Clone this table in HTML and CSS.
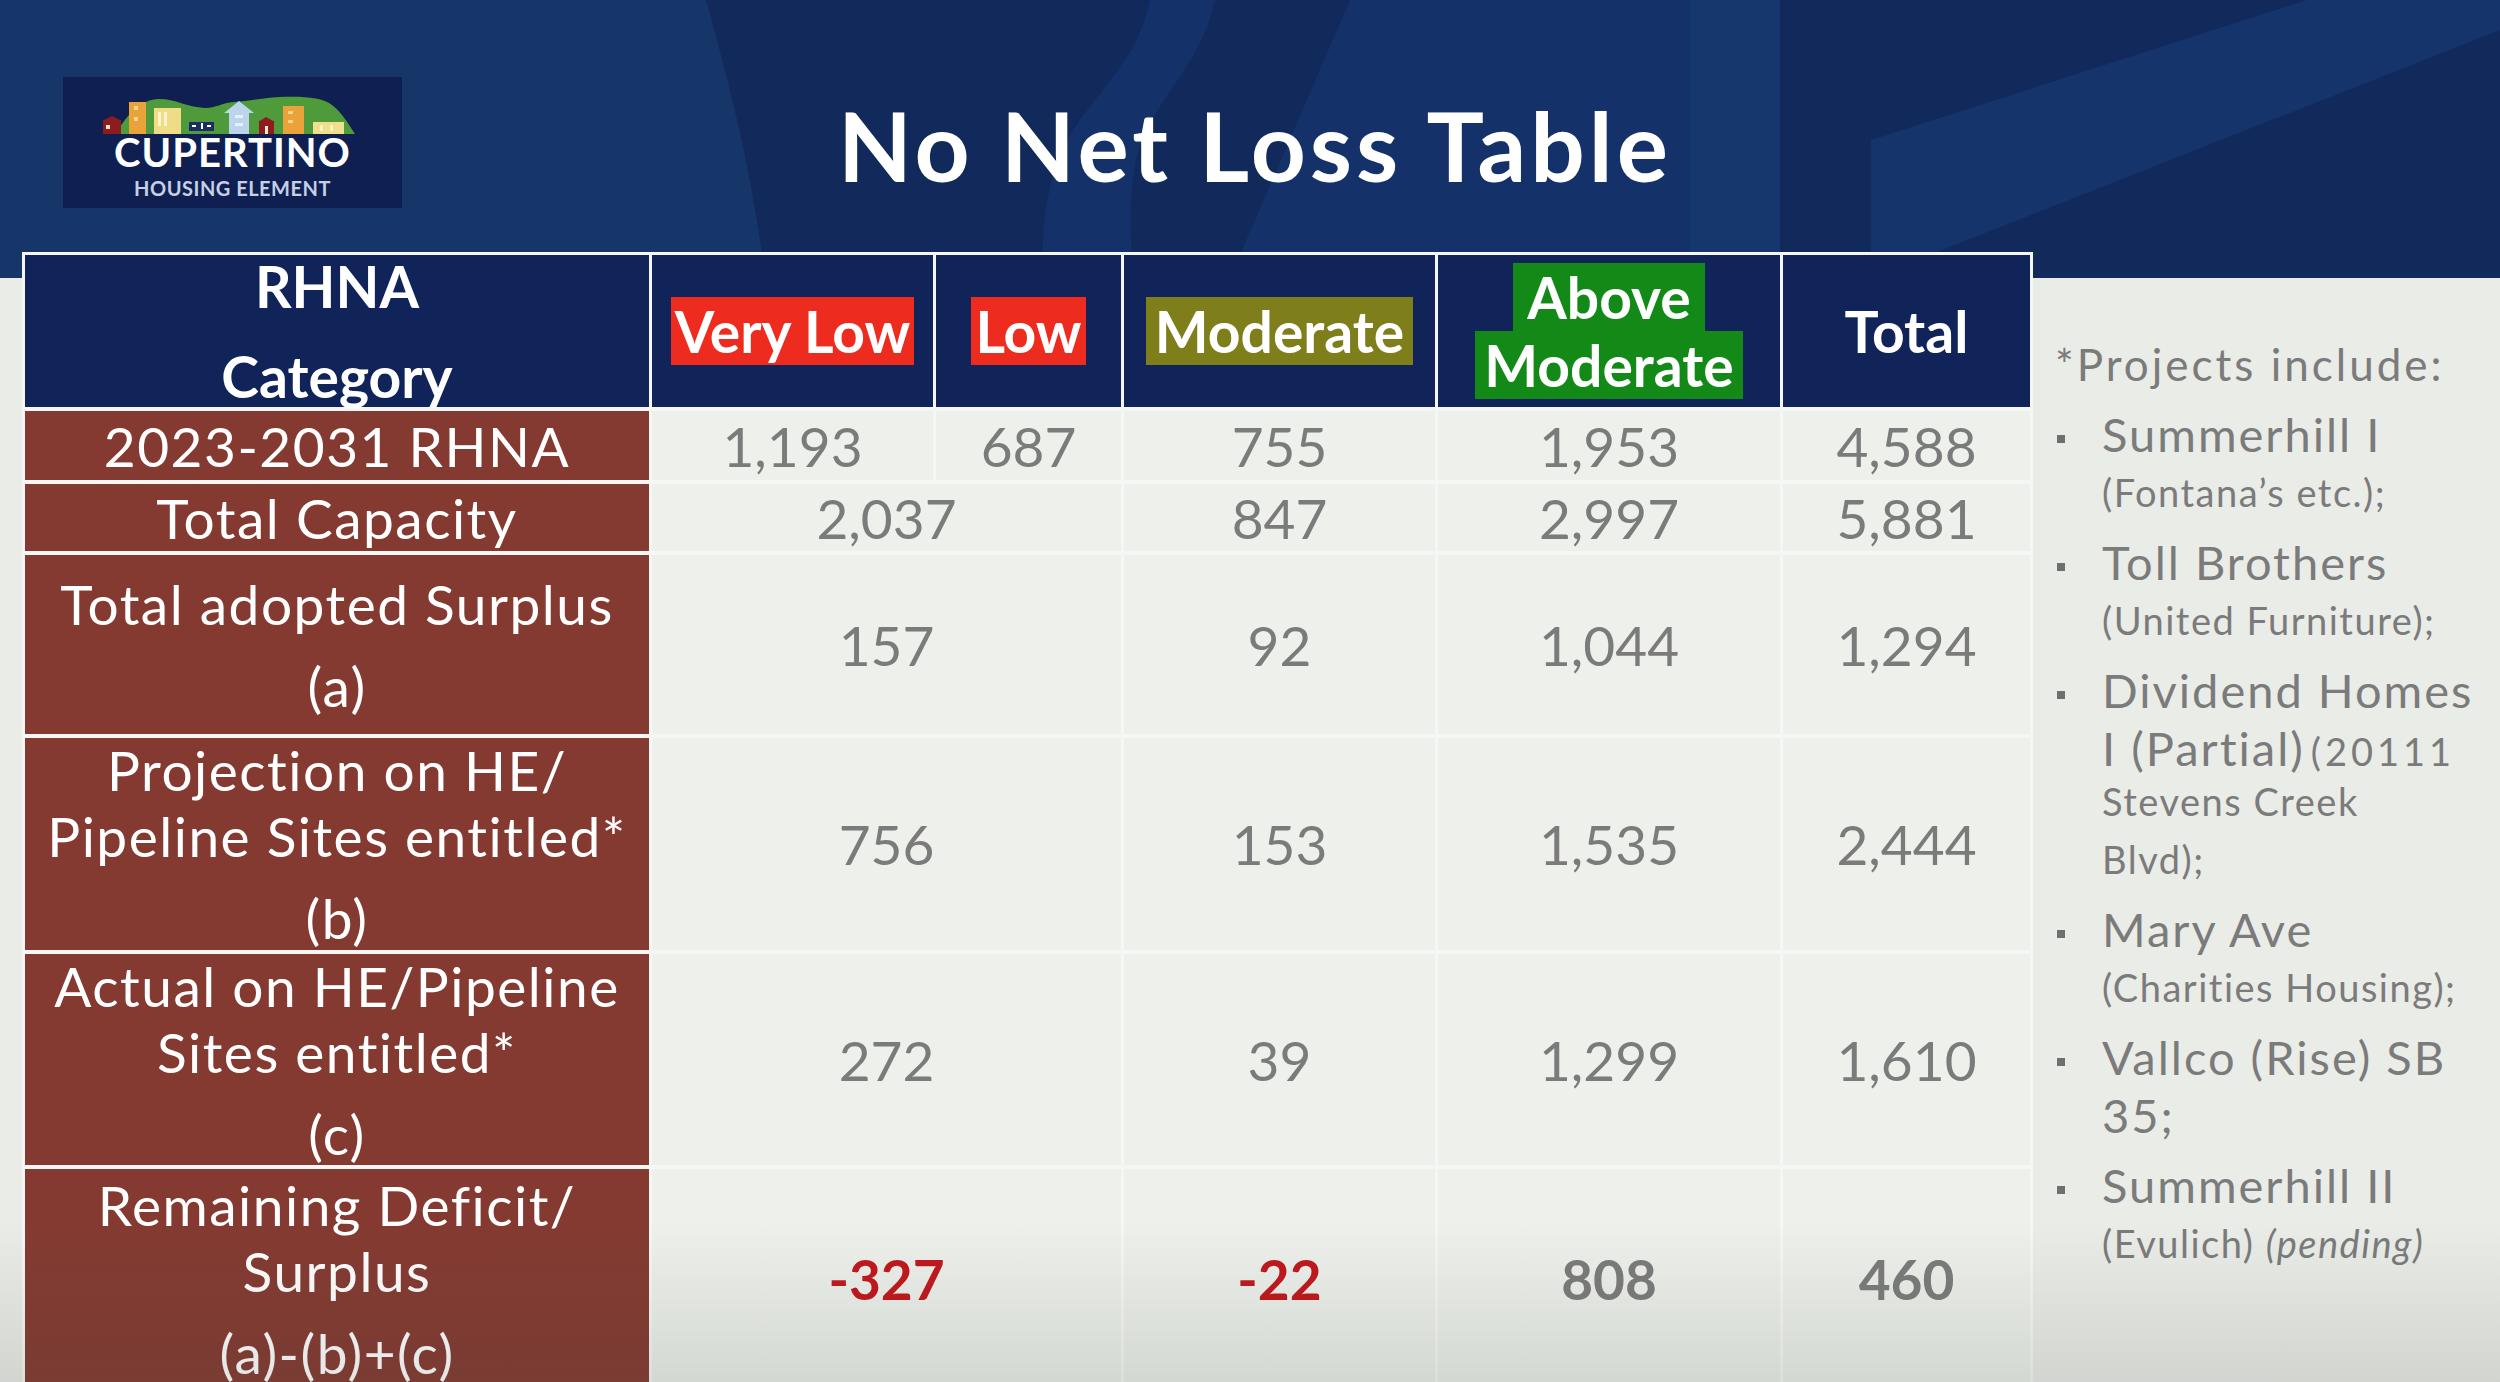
FILE: index.html
```html
<!DOCTYPE html>
<html lang="en">
<head>
<meta charset="utf-8">
<title>No Net Loss Table</title>
<link rel="stylesheet" href="styles.css">
</head>
<body>
<div class="slide">
  <header class="top">
    <div class="logo">
      <svg class="skyline" width="337" height="40" viewBox="0 0 337 40">
        <path d="M52 39 C62 20 78 4 95 4 C112 4 122 12 141 13 C152 13 158 8 170 7 C185 6 198 3 215 2 C238 1 258 2 268 10 C278 18 284 28 291 39 Z" fill="#4f9a3a"/>
        <polygon points="39,25 57,25 57,39 39,39" fill="#8e1c1c"/>
        <polygon points="38,26 48,21 58,26" fill="#8e1c1c"/>
        <rect x="42" y="30" width="4" height="4" fill="#f3e6d0"/>
        <rect x="65" y="7" width="17" height="32" fill="#eaa23a"/>
        <rect x="70" y="11" width="4" height="4" fill="#f7d58c"/>
        <rect x="70" y="22" width="4" height="4" fill="#f7d58c"/>
        <rect x="90" y="13" width="27" height="26" fill="#f0dc86"/>
        <rect x="94" y="17" width="3" height="14" fill="#fbf3cc"/>
        <rect x="100" y="17" width="3" height="14" fill="#fbf3cc"/>
        <rect x="125" y="27" width="25" height="9" fill="#1c2d63"/>
        <rect x="128" y="30" width="4" height="2" fill="#ffffff"/>
        <rect x="137" y="28" width="2" height="6" fill="#ffffff"/>
        <rect x="143" y="30" width="4" height="2" fill="#ffffff"/>
        <polygon points="165,39 165,18 160,18 175,6 190,18 185,18 185,39" fill="#bcd5ec"/>
        <rect x="171" y="20" width="8" height="3" fill="#e6f0fa"/>
        <rect x="171" y="28" width="8" height="3" fill="#e6f0fa"/>
        <polygon points="195,26 210,26 210,39 195,39" fill="#8e1c1c"/>
        <polygon points="194,27 202,22 211,27" fill="#8e1c1c"/>
        <rect x="201" y="31" width="3" height="8" fill="#f3e6d0"/>
        <rect x="219" y="11" width="21" height="28" fill="#eaa23a"/>
        <rect x="224" y="16" width="5" height="3" fill="#f7d58c"/>
        <rect x="224" y="25" width="5" height="3" fill="#f7d58c"/>
        <rect x="249" y="27" width="31" height="12" fill="#efe08d"/>
        <rect x="256" y="30" width="3" height="6" fill="#fbf2c4"/>
        <rect x="266" y="30" width="3" height="6" fill="#fbf2c4"/>
      </svg>
      <div class="logo-name">CUPERTINO</div>
      <div class="logo-sub">HOUSING ELEMENT</div>
    </div>
    <h1 class="title">No Net Loss Table</h1>
  </header>

  <main class="content">
    <div class="nnl">
      <div class="hd hd-cat"><div class="cat-text">RHNA<br>Category</div></div>
      <div class="hd"><span class="tag tag-red">Very Low</span></div>
      <div class="hd"><span class="tag tag-red">Low</span></div>
      <div class="hd"><span class="tag tag-olive tag-wide">Moderate</span></div>
      <div class="hd"><div class="stack"><span class="tag tag-green tag-above">Above</span><span class="tag tag-green tag-wide">Moderate</span></div></div>
      <div class="hd">Total</div>

      <div class="lab"><span>2023-2031 RHNA</span></div>
      <div class="num">1,193</div>
      <div class="num">687</div>
      <div class="num">755</div>
      <div class="num">1,953</div>
      <div class="num">4,588</div>

      <div class="lab"><span>Total Capacity</span></div>
      <div class="num span2">2,037</div>
      <div class="num">847</div>
      <div class="num">2,997</div>
      <div class="num">5,881</div>

      <div class="lab"><span>Total adopted Surplus</span><span class="sub">(a)</span></div>
      <div class="num span2">157</div>
      <div class="num">92</div>
      <div class="num">1,044</div>
      <div class="num">1,294</div>

      <div class="lab"><span>Projection on HE/</span><span>Pipeline Sites entitled*</span><span class="sub">(b)</span></div>
      <div class="num span2">756</div>
      <div class="num">153</div>
      <div class="num">1,535</div>
      <div class="num">2,444</div>

      <div class="lab"><span>Actual on HE/Pipeline</span><span>Sites entitled*</span><span class="sub">(c)</span></div>
      <div class="num span2">272</div>
      <div class="num">39</div>
      <div class="num">1,299</div>
      <div class="num">1,610</div>

      <div class="lab"><span>Remaining Deficit/</span><span>Surplus</span><span class="sub">(a)-(b)+(c)</span></div>
      <div class="num span2 neg">-327</div>
      <div class="num neg">-22</div>
      <div class="num strong">808</div>
      <div class="num strong">460</div>
    </div>

    <aside class="notes">
      <p class="notes-intro">*Projects include:</p>
      <ul class="notes-list">
        <li><div class="item"><span class="line big">Summerhill I</span><span class="line small">(Fontana’s etc.);</span></div></li>
        <li><div class="item"><span class="line big">Toll Brothers</span><span class="line small">(United Furniture);</span></div></li>
        <li><div class="item"><span class="line big">Dividend Homes</span><span class="line big">I (Partial)<span class="inl-small">(20111</span></span><span class="line small tight">Stevens Creek</span><span class="line small">Blvd);</span></div></li>
        <li><div class="item"><span class="line big">Mary Ave</span><span class="line small">(Charities Housing);</span></div></li>
        <li><div class="item"><span class="line big">Vallco (Rise) SB</span><span class="line big">35;</span></div></li>
        <li><div class="item"><span class="line big">Summerhill II</span><span class="line small">(Evulich) <em>(pending)</em></span></div></li>
      </ul>
    </aside>
  </main>
  <div class="vignette"></div>
</div>
</body>
</html>
```

FILE: styles.css
```css
* {
  box-sizing: border-box;
  margin: 0;
  padding: 0;
}

html,
body {
  width: 2500px;
  height: 1382px;
  overflow: hidden;
}

body {
  background: #eaece8;
  font-family: Lato, "Liberation Sans", sans-serif;
}

.slide {
  position: relative;
  width: 2500px;
  height: 1382px;
  overflow: hidden;
}

/* ---------- header ---------- */
.top {
  height: 278px;
  display: flex;
  align-items: flex-start;
  padding: 77px 0 0 63px;
  background-color: #122a5b;
  background-image: url("data:image/svg+xml,%3Csvg xmlns='http://www.w3.org/2000/svg' width='2500' height='278' viewBox='0 0 2500 278'%3E%3Cpath d='M0 0H706C728 80 752 170 765 278H0Z' fill='%23163669'/%3E%3Cpath d='M1150 0H1215C1200 70 1150 100 1136 160C1128 200 1130 240 1134 278H1044C1040 230 1045 170 1080 120C1110 80 1140 50 1150 0Z' fill='%2314316a'/%3E%3Cpath d='M1230 278L1350 0H1690V278Z' fill='%2314316a'/%3E%3Cpath d='M1690 0H1780V278H1690Z' fill='%2316376e'/%3E%3Cpath d='M1871 140L2307 0H2500V30L1871 278Z' fill='%2315346b'/%3E%3C/svg%3E");
  background-repeat: no-repeat;
}

.logo {
  flex: none;
  width: 339px;
  height: 131px;
  background: #0f1f52;
  display: flex;
  flex-direction: column;
  align-items: center;
}

.skyline {
  display: block;
  flex: none;
  margin-top: 18px;
}

.logo-name {
  font-weight: 700;
  font-size: 40px;
  line-height: 48px;
  letter-spacing: 1px;
  margin-top: -7px;
  color: #ffffff;
}

.logo-sub {
  font-weight: 700;
  font-size: 20px;
  line-height: 24px;
  letter-spacing: 0.5px;
  color: #c6d0e3;
}

.title {
  margin: 20px 0 0 436px;
  font-weight: 700;
  font-size: 96px;
  line-height: 96px;
  letter-spacing: 4px;
  color: #ffffff;
  white-space: nowrap;
}

/* ---------- content ---------- */
.content {
  display: flex;
  margin-top: -26px;
  padding-left: 22px;
}

.nnl {
  flex: none;
  width: 2011px;
  display: grid;
  grid-template-columns: 624px 281px 185px 311px 342px 247px;
  grid-template-rows: 152px 69px 67px 179px 212px 211px 220px;
  column-gap: 3px;
  row-gap: 4px;
  padding: 3px 3px 0;
  background: #f6f7f5;
}

.hd {
  background: #10245a;
  color: #ffffff;
  font-weight: 700;
  font-size: 57px;
  line-height: 68px;
  display: flex;
  align-items: center;
  justify-content: center;
  text-align: center;
  white-space: nowrap;
}

.cat-text {
  line-height: 90px;
}

.tag {
  display: inline-block;
  line-height: 68px;
  padding: 0 4px;
  color: #ffffff;
}

.tag-wide {
  padding: 0 9px;
}

.tag-above {
  padding: 0 14px;
}

.tag-red {
  background: #ee2b1f;
}

.tag-olive {
  background: #7e7e1b;
}

.tag-green {
  background: #138a17;
}

.stack {
  display: flex;
  flex-direction: column;
  align-items: center;
}

.lab {
  background: #843a31;
  color: #ffffff;
  font-size: 55px;
  line-height: 66px;
  letter-spacing: 1.5px;
  display: flex;
  flex-direction: column;
  align-items: center;
  justify-content: center;
  text-align: center;
  white-space: nowrap;
}

.lab .sub {
  margin-top: 16px;
}

.num {
  background: #edf0eb;
  color: #7b7b7b;
  font-size: 55px;
  display: flex;
  align-items: center;
  justify-content: center;
}

.span2 {
  grid-column: span 2;
}

.neg {
  color: #c2171c;
  font-weight: 700;
}

.strong {
  font-weight: 700;
}

/* ---------- notes ---------- */
.notes {
  flex: 1;
  padding: 83px 0 0 22px;
  color: #7b7b7b;
  white-space: nowrap;
}

.notes-intro {
  font-size: 44px;
  line-height: 58px;
  letter-spacing: 3px;
}

.notes-list {
  list-style: none;
}

.notes-list li {
  display: flex;
  margin-top: 12px;
}

.notes-list li::before {
  content: "";
  flex: none;
  width: 8px;
  height: 8px;
  background: #6f6f6f;
  margin: 30px 37px 0 2px;
}

.line {
  display: block;
  line-height: 58px;
}

.big {
  font-size: 47px;
  letter-spacing: 2px;
}

.small {
  font-size: 38px;
  letter-spacing: 1.5px;
}

.tight {
  margin-top: -5px;
}

.inl-small {
  font-size: 38px;
  line-height: 1;
  letter-spacing: 4px;
  margin-left: 6px;
}

.vignette {
  position: absolute;
  left: 0;
  right: 0;
  bottom: 0;
  height: 160px;
  background: linear-gradient(to bottom, rgba(60, 70, 60, 0), rgba(60, 70, 60, 0.14));
  pointer-events: none;
}
```
